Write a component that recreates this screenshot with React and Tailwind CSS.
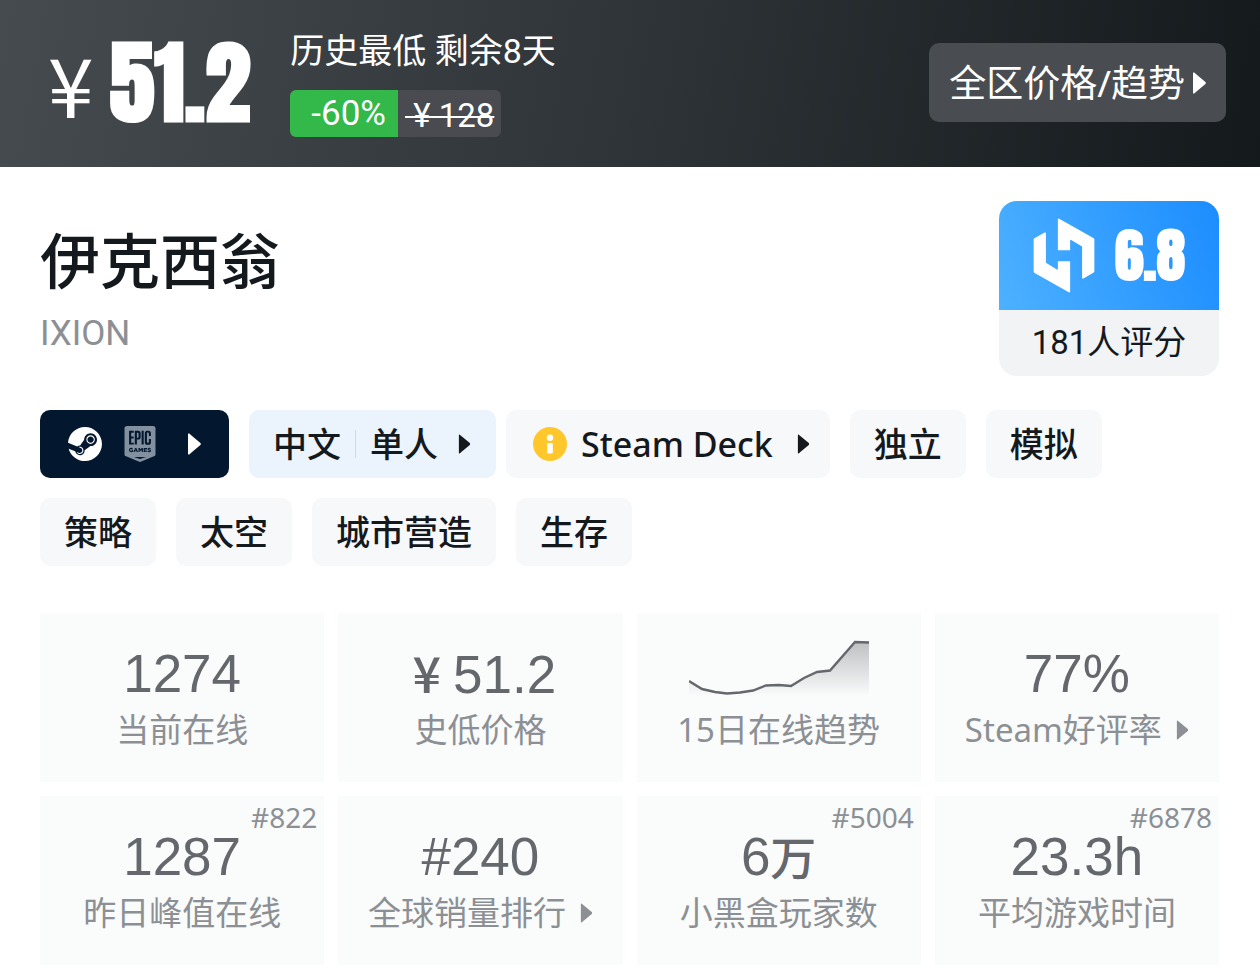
import { SiEpicgames, SiSteam } from "react-icons/si";

function Triangle({ className = "" }) {
  return (
    <svg viewBox="0 0 13 22" aria-hidden="true" className={"h-[22px] w-[13px] shrink-0 fill-current " + className}>
      <path d="M0 1.2Q0 0 1.2.6Q2 1 2.6 1.8L12.4 10Q13.3 11 12.4 12L2.6 20.2Q2 21 1.2 21.4Q0 22 0 20.8Z" />
    </svg>
  );
}

function PriceHeader() {
  return (
    <header className="flex min-h-[167px] items-center justify-between bg-linear-[100deg,#464b4f,#2f3438_50%,#14191c] pr-[34px] pb-[2px] pl-12 text-white">
      <div className="flex items-center">
        <div className="flex items-center">
          <span className="font-['Noto_Sans_CJK_SC',sans-serif] text-[82px] leading-[84px]">¥</span>
          <span className="ml-4 font-['Impact','Anton',sans-serif] text-[91px] leading-[84px] font-bold">51.2</span>
        </div>
        <div className="ml-10">
          <p className="font-['Roboto','Noto_Sans_CJK_SC',sans-serif] text-[34px] leading-[44px]">历史最低 剩余8天</p>
          <div className="mt-[17px] flex h-[47px] w-fit overflow-hidden rounded-md bg-[#494b50] font-['Roboto','Noto_Sans_CJK_SC',sans-serif] leading-[48px]">
            <span className="bg-[#33b84a] pr-3 pl-[21px] text-[35px]">-60%</span>
            <s className="px-[7px] text-[33px] leading-[51px] decoration-2">{"\u00a0¥\u00a0128"}</s>
          </div>
        </div>
      </div>
      <button className="flex h-[79px] items-center rounded-[10px] bg-[#494c50] px-5 text-[37px] leading-[44px]">
        全区价格/趋势
        <Triangle className="ml-2" />
      </button>
    </header>
  );
}

function ScoreBadge() {
  return (
    <div className="w-[220px] overflow-hidden rounded-[18px] bg-[#f1f3f5] text-center">
      <div className="flex h-[109px] items-center justify-center gap-5 bg-linear-[70deg,#4db1ff,#1c8dff] text-white">
        <svg viewBox="158 83 185 226" aria-hidden="true" className="h-[75px] w-[62px] fill-current">
          <path d="M160 145L192 127Q196 125 196 129V218L229 238Q232 240 232 236V213H269V304Q269 309 265 307L162 249Q159 247 159 243V148Z" />
          <path d="M232 88Q232 83 236 85L339 143Q342 145 342 148V243Q342 247 339 248L309 265Q305 267 305 263V169L272 149Q269 147 269 151V180H232Z" />
        </svg>
        <span className="font-['Impact','Anton',sans-serif] text-[58px] leading-[72px] font-bold">6.8</span>
      </div>
      <p className="font-['Roboto','Noto_Sans_CJK_SC',sans-serif] text-[33px] leading-[66px] text-[#14191e]">181人评分</p>
    </div>
  );
}

const chip = "flex h-[68px] items-center rounded-[10px] text-[34px] leading-[44px] font-medium";

function Tag({ children }) {
  return <a href="#" className={chip + " bg-[#f7f8fa] px-6"}>{children}</a>;
}

function Tags() {
  return (
    <nav className="mt-[34px] flex flex-wrap gap-5 text-[#14191e]">
      <button aria-label="Steam, Epic Games" className={chip + " bg-[#03182e] px-7 text-white"}>
        <SiSteam className="size-[34px]" />
        <SiEpicgames className="ml-5 size-[36px] text-[#8390a0]" />
        <Triangle className="ml-[30px]" />
      </button>
      <div className="flex gap-[10px]">
        <button className={chip + " bg-[#ebf3fc] pr-[25px] pl-6"}>
          中文
          <span className="mx-[14px] h-7 w-px bg-[#d0d8e0]" />
          单人
          <Triangle className="ml-5 scale-90" />
        </button>
        <button className={chip + " bg-[#f7f8fa] pr-5 pl-[27px]"}>
          <svg viewBox="0 0 34 34" aria-hidden="true" className="mr-[14px] size-[34px]">
            <circle cx="17" cy="17" r="17" fill="#ffc72c" />
            <circle cx="17" cy="10.8" r="3.2" fill="#fff" />
            <rect x="14.2" y="16" width="5.6" height="10.6" rx="1" fill="#fff" />
          </svg>
          Steam Deck
          <Triangle className="ml-6 scale-90" />
        </button>
      </div>
      {["独立", "模拟", "策略", "太空", "城市营造", "生存"].map((t) => (
        <Tag key={t}>{t}</Tag>
      ))}
    </nav>
  );
}

function TrendChart() {
  return (
    <svg viewBox="0 0 180 56" aria-hidden="true" className="h-14 w-[180px]">
      <defs>
        <linearGradient id="trend" x1="0" y1="0" x2="0" y2="1">
          <stop offset="0" stopColor="#64686c" stopOpacity=".4" />
          <stop offset="1" stopColor="#64686c" stopOpacity="0" />
        </linearGradient>
      </defs>
      <path d="M0 41L13 49L26 52L38 53.500L51 52.500L64 50.500L77 45.500L90 45L102 46L115 38L128 32L141 30.500L166 2L180 2.500V56H0Z" fill="url(#trend)" />
      <path d="M0 41L13 49L26 52L38 53.500L51 52.500L64 50.500L77 45.500L90 45L102 46L115 38L128 32L141 30.500L166 2L180 2.500" fill="none" stroke="#64686c" strokeWidth="2.4" />
    </svg>
  );
}

const stats = [
  { value: "1274", label: "当前在线" },
  { currency: "¥", value: "51.2", label: "史低价格" },
  { chart: true, label: "15日在线趋势" },
  { value: "77%", label: "Steam好评率", more: true },
  { value: "1287", label: "昨日峰值在线", rank: "#822" },
  { value: "#240", label: "全球销量排行", more: true },
  { value: "6", unit: "万", label: "小黑盒玩家数", rank: "#5004" },
  { value: "23.3h", label: "平均游戏时间", rank: "#6878" },
];

function Stat({ currency, value, unit, chart, label, more, rank }) {
  return (
    <div className="relative flex h-[169px] flex-col items-center bg-[#fafbfb]">
      {rank && <span className="absolute top-[5px] right-[7px] text-[28px] leading-8 text-[#8c9094]">{rank}</span>}
      {chart ? (
        <div className="flex h-[95px] items-end pb-3"><TrendChart /></div>
      ) : (
        <p className="h-[95px] pt-[33px] font-['Liberation_Sans','Noto_Sans_CJK_SC',sans-serif] text-[53px] leading-[56px] text-[#64686d]">
          {currency && <span className="mr-3 ml-2 font-['Noto_Sans_CJK_SC',sans-serif] text-[50px] leading-none font-medium">{currency}</span>}
          {value}
          {unit && <span className="text-[46px] leading-none font-medium">{unit}</span>}
        </p>
      )}
      <div className="flex items-center text-[33px] leading-[44px] text-[#8c9094]">
        {label}
        {more && <Triangle className="ml-[14px] scale-90" />}
      </div>
    </div>
  );
}

export default function App() {
  return (
    <div className="min-h-screen bg-white font-['Noto_Sans','Noto_Sans_CJK_SC',sans-serif]">
      <PriceHeader />
      <main className="pt-[34px] pr-[41px] pb-[9px] pl-10">
        <div className="flex items-start justify-between">
          <div className="pt-[22px]">
            <h1 className="text-[60px] leading-[76px] font-medium text-[#14191e]">伊克西翁</h1>
            <p className="mt-[13px] font-['Roboto',sans-serif] text-[35px] leading-[44px] text-[#8c9094]">IXION</p>
          </div>
          <ScoreBadge />
        </div>
        <Tags />
        <section className="mt-[47px] grid grid-cols-4 gap-[14px]">
          {stats.map((s) => (
            <Stat key={s.label} {...s} />
          ))}
        </section>
      </main>
    </div>
  );
}
